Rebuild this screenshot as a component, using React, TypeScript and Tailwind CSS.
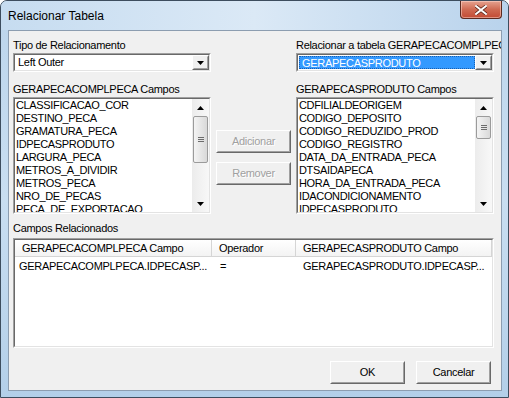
import React from 'react';

const leftFields = [
  'CLASSIFICACAO_COR',
  'DESTINO_PECA',
  'GRAMATURA_PECA',
  'IDPECASPRODUTO',
  'LARGURA_PECA',
  'METROS_A_DIVIDIR',
  'METROS_PECA',
  'NRO_DE_PECAS',
  'PECA_DE_EXPORTACAO',
];

const rightFields = [
  'CDFILIALDEORIGEM',
  'CODIGO_DEPOSITO',
  'CODIGO_REDUZIDO_PROD',
  'CODIGO_REGISTRO',
  'DATA_DA_ENTRADA_PECA',
  'DTSAIDAPECA',
  'HORA_DA_ENTRADA_PECA',
  'IDACONDICIONAMENTO',
  'IDPECASPRODUTO',
];

const ArrowDown = () => (
  <svg width="7" height="4" viewBox="0 0 7 4">
    <path d="M0 0h7L3.5 4z" fill="#000" />
  </svg>
);

const ArrowUp = () => (
  <svg width="7" height="4" viewBox="0 0 7 4">
    <path d="M0 4h7L3.5 0z" fill="#000" />
  </svg>
);

const Sunken: React.FC<{ className?: string; children: React.ReactNode }> = ({ className = '', children }) => (
  <div className={`border border-t-[#a0a0a0] border-l-[#a0a0a0] border-b-white border-r-white ${className}`}>
    <div className="w-full h-full border border-t-[#696969] border-l-[#696969] border-b-[#e3e3e3] border-r-[#e3e3e3] bg-white overflow-hidden">
      {children}
    </div>
  </div>
);

const Raised: React.FC<{ className?: string; children?: React.ReactNode }> = ({ className = '', children }) => (
  <div className={`border border-t-white border-l-white border-b-[#696969] border-r-[#696969] ${className}`}>
    <div className="w-full h-full border border-t-[#f0f0f0] border-l-[#f0f0f0] border-b-[#a0a0a0] border-r-[#a0a0a0] bg-[#f0f0f0] flex items-center justify-center">
      {children}
    </div>
  </div>
);

const Combo: React.FC<{ value: string; selected?: boolean }> = ({ value, selected }) => (
  <Sunken className="w-[198px] h-[19px]">
    <div className="flex h-full">
      <div className="flex-1 pl-[1px] py-[1px]">
        <div
          className={`h-full pl-[2px] leading-[13px] ${
            selected ? 'bg-[#3399ff] text-white border border-dotted border-[#1a5fb0]' : 'text-black'
          }`}
        >
          {value}
        </div>
      </div>
      <Raised className="w-[17px] h-[15px]">
        <ArrowDown />
      </Raised>
    </div>
  </Sunken>
);

const Scroll: React.FC<{ thumb: number }> = ({ thumb }) => (
  <div className="w-[17px] h-full bg-gradient-to-r from-[#ececec] to-[#f8f8f8] flex flex-col">
    <div className="h-[17px] flex items-center justify-center">
      <ArrowUp />
    </div>
    <div className="flex-1 px-[1px]">
      <div
        className="rounded-[2px] border border-[#9b9b9b] bg-gradient-to-r from-[#f4f4f4] to-[#d9d9d9] flex flex-col items-center justify-center gap-[1px]"
        style={{ height: thumb }}
      >
        <div className="w-[6px] h-[1px] bg-[#6b6b6b]" />
        <div className="w-[6px] h-[1px] bg-[#6b6b6b]" />
        <div className="w-[6px] h-[1px] bg-[#6b6b6b]" />
      </div>
    </div>
    <div className="h-[17px] flex items-center justify-center">
      <ArrowDown />
    </div>
  </div>
);

const ListBox: React.FC<{ items: string[]; thumb: number }> = ({ items, thumb }) => (
  <Sunken className="w-[198px] h-[117px]">
    <div className="flex h-full">
      <div className="flex-1 pl-[1px] overflow-hidden">
        {items.map((it) => (
          <div key={it} className="h-[13px] leading-[13px] tracking-[-0.35px] whitespace-nowrap">
            {it}
          </div>
        ))}
      </div>
      <Scroll thumb={thumb} />
    </div>
  </Sunken>
);

const DisabledBtn: React.FC<{ label: string; className?: string }> = ({ label, className = '' }) => (
  <Raised className={`w-[75px] h-[23px] ${className}`}>
    <span className="text-[#a0a0a0] [text-shadow:1px_1px_0_#ffffff]">{label}</span>
  </Raised>
);

export default function App() {
  return (
    <div className="w-[509px] h-[398px] relative overflow-hidden rounded-t-[7px] border border-[#3d4d5e] bg-gradient-to-b from-[#bcd5ec] via-[#c9def1] to-[#b3cfe9] font-['Liberation_Sans',sans-serif] text-[11px] tracking-[-0.3px] text-black">
      {/* title bar */}
      <div className="h-[29px] flex items-start bg-gradient-to-r from-[#c6dcf0] via-[#dbe9f6] to-[#b9d3ec]">
        <div className="pl-[7px] pt-[6px] text-[12px] tracking-normal text-black">Relacionar Tabela</div>
        <div className="ml-auto mr-[6px] w-[42px] h-[18px] rounded-b-[4px] border border-t-0 border-[#5b2a20] bg-gradient-to-b from-[#e5a290] via-[#cf6a52] to-[#c24a33] flex items-center justify-center shadow-[inset_0_0_0_1px_rgba(255,220,210,0.5)]">
          <svg width="12" height="10" viewBox="0 0 12 10">
            <path d="M1 1l10 8M11 1L1 9" stroke="#5a2418" strokeWidth="3.4" strokeLinecap="square" />
            <path d="M1 1l10 8M11 1L1 9" stroke="#ffffff" strokeWidth="2" strokeLinecap="square" />
          </svg>
        </div>
      </div>

      {/* client area */}
      <div className="ml-[7px] w-[494px] h-[361px] border border-[#8c9db0] bg-[#f0f0f0] pl-[4px] pt-[7px]">
        <div className="flex">
          <div className="w-[198px] flex flex-col">
            <div className="h-[15px] leading-[14px]">Tipo de Relacionamento</div>
            <Combo value="Left Outer" />
            <div className="mt-[10px] h-[15px] leading-[14px]">GERAPECACOMPLPECA Campos</div>
            <ListBox items={leftFields} thumb={47} />
          </div>
          <div className="w-[85px] pl-[5px] pt-[92px] flex flex-col">
            <DisabledBtn label="Adicionar" />
            <DisabledBtn label="Remover" className="mt-[9px]" />
          </div>
          <div className="flex-1 flex flex-col overflow-hidden">
            <div className="h-[15px] leading-[14px] whitespace-nowrap">Relacionar a tabela GERAPECACOMPLPECA</div>
            <Combo value="GERAPECASPRODUTO" selected />
            <div className="mt-[10px] h-[15px] leading-[14px]">GERAPECASPRODUTO Campos</div>
            <ListBox items={rightFields} thumb={23} />
          </div>
        </div>

        <div className="mt-[7px] h-[17px] leading-[15px]">Campos Relacionados</div>
        <Sunken className="w-[481px] h-[110px]">
          <div className="flex h-[17px] bg-gradient-to-b from-white to-[#f3f3f3] border-b border-[#d5d5d5]">
            <div className="w-[197px] border-r border-[#d5d5d5] pl-[7px] leading-[16px]">GERAPECACOMPLPECA Campo</div>
            <div className="w-[84px] border-r border-[#d5d5d5] pl-[7px] leading-[16px]">Operador</div>
            <div className="w-[196px] border-r border-[#d5d5d5] pl-[7px] leading-[16px]">GERAPECASPRODUTO Campo</div>
          </div>
          <div className="flex h-[17px] mt-[1px] leading-[17px]">
            <div className="w-[197px] pl-[4px] whitespace-nowrap">GERAPECACOMPLPECA.IDPECASP...</div>
            <div className="w-[84px] pl-[8px]">=</div>
            <div className="w-[196px] pl-[7px] whitespace-nowrap">GERAPECASPRODUTO.IDPECASP...</div>
          </div>
        </Sunken>

        <div className="w-[481px] mt-[13px] flex justify-end gap-[11px] pr-[3px]">
          <Raised className="w-[75px] h-[23px]">OK</Raised>
          <Raised className="w-[75px] h-[23px]">Cancelar</Raised>
        </div>
      </div>
    </div>
  );
}
